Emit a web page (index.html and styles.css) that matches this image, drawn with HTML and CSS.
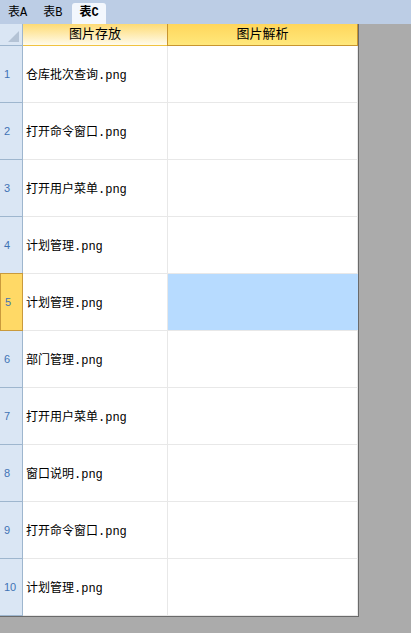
FILE: index.html
```html
<!DOCTYPE html>
<html lang="zh">
<head>
  <meta charset="UTF-8" />
  <title>表C</title>
  <link rel="stylesheet" href="styles.css">
</head>
<body>
  <div class="tabs">
    <span class="tab">表A</span>
    <span class="tab">表B</span>
    <span class="tab active">表C</span>
  </div>

  <div class="sheet">
    <div class="corner"><span class="tri"></span></div>
    <div class="colhead">图片存放</div>
    <div class="colhead sel">图片解析</div>

    <div class="rowhead">1</div><div class="cell">仓库批次查询.png</div><div class="cell"></div>
    <div class="rowhead">2</div><div class="cell">打开命令窗口.png</div><div class="cell"></div>
    <div class="rowhead">3</div><div class="cell">打开用户菜单.png</div><div class="cell"></div>
    <div class="rowhead">4</div><div class="cell">计划管理.png</div><div class="cell"></div>
    <div class="rowhead sel">5</div><div class="cell">计划管理.png</div><div class="cell active"></div>
    <div class="rowhead">6</div><div class="cell">部门管理.png</div><div class="cell"></div>
    <div class="rowhead">7</div><div class="cell">打开用户菜单.png</div><div class="cell"></div>
    <div class="rowhead">8</div><div class="cell">窗口说明.png</div><div class="cell"></div>
    <div class="rowhead">9</div><div class="cell">打开命令窗口.png</div><div class="cell"></div>
    <div class="rowhead">10</div><div class="cell">计划管理.png</div><div class="cell"></div>
  </div>
</body>
</html>
```

FILE: styles.css
```css
body {
  margin: 0;
  background-color: #ababab;
  font-family: "Liberation Mono", "Noto Sans CJK SC", monospace;
  font-size: 12px;
  color: #000;
}

.tabs {
  height: 24px;
  background-color: #bccde5;
  display: flex;
  align-items: flex-end;
  box-sizing: border-box;
}

.tab {
  height: 21px;
  line-height: 20px;
  padding: 0 8px;
  font-size: 12px;
  font-weight: normal;
}

.tab.active {
  background-color: #f3f7fd;
  border-radius: 3px 3px 0 0;
  margin-left: 2px;
  padding: 0 7px;
  font-weight: bold;
}

.sheet {
  display: grid;
  grid-template-columns: 23px 145px 190px;
  grid-template-rows: 22px repeat(10, 57px);
  width: 358px;
  background-color: #fff;
  border-right: 1px solid #6a6a6a;
  border-bottom: 1px solid #6a6a6a;
}

.corner {
  position: relative;
  background-color: #dae6f4;
  border-right: 1px solid #9eb6ce;
  border-bottom: 1px solid #9eb6ce;
}

.tri {
  position: absolute;
  right: 3px;
  bottom: 3px;
  width: 0;
  height: 0;
  border-left: 11px solid transparent;
  border-bottom: 11px solid #b4c3d5;
}

.colhead {
  text-align: center;
  line-height: 21px;
  font-size: 13px;
  background: linear-gradient(#fedb74, #fffbec);
  border-right: 1px solid #e4e4e4;
  border-bottom: 1px solid #f1c33f;
}

.colhead.sel {
  background: linear-gradient(#ffd65b, #ffe87c);
  border: 1px solid #c8952f;
  border-top: none;
  margin-left: -1px;
}

.rowhead {
  background-color: #dae6f4;
  border-right: 1px solid #9eb6ce;
  border-bottom: 1px solid #9eb6ce;
  color: #3f73b4;
  font-family: "Liberation Sans", sans-serif;
  font-size: 11px;
  display: flex;
  align-items: center;
  padding-left: 4px;
}

.rowhead.sel {
  background-color: #ffd966;
  border: 1px solid #c99a3c;
  margin-top: -1px;
}

.cell {
  border-right: 1px solid #e8e8e8;
  border-bottom: 1px solid #e8e8e8;
  display: flex;
  align-items: center;
  padding-left: 3px;
}

.cell.active {
  background-color: #b7dbff;
  border-right: none;
}
```
